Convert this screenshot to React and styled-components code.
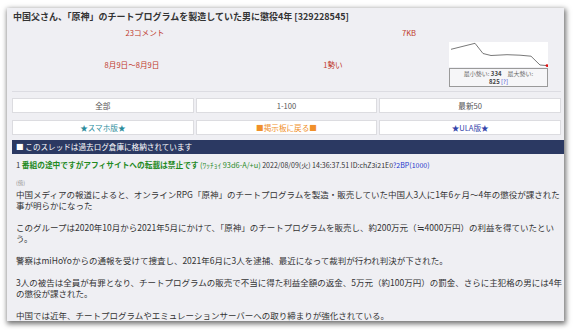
import React from "react";
import styled, { createGlobalStyle } from "styled-components";

const Global = createGlobalStyle`
  html, body { margin: 0; padding: 0; background: #ffffff; }
  body { font-family: "Noto Sans CJK JP", "Noto Sans", sans-serif; }
  * { box-sizing: border-box; }
`;

const Page = styled.div`
  width: 577px;
  height: 330px;
  padding: 8px 13px 9px 7px;
  overflow: hidden;
`;

const Card = styled.div`
  height: 313px;
  background: #efeff3;
  box-shadow: 1px 2px 5px 1px rgba(0, 0, 0, 0.55);
  padding: 3px 3px 0 5px;
  overflow: hidden;
  color: #333;
`;

const Title = styled.h1`
  margin: 0 0 0 1px;
  font-size: 9px;
  line-height: 12px;
  font-weight: 700;
  color: #333;
  white-space: nowrap;
`;

const Stats = styled.div`
  border-bottom: 1px solid #dcdce2;
  padding-bottom: 4px;
`;

const StatRow = styled.div`
  display: grid;
  grid-template-columns: ${(p) => p.$cols};
  align-items: center;
  margin-top: ${(p) => p.$mt}px;
  padding-left: 1px;
`;

const Stat = styled.div`
  text-align: center;
  color: #c0392b;
  font-size: 7.6px;
  line-height: 12px;
`;

const ChartBox = styled.div`
  width: 99px;
  margin-left: 34px;
`;

const ChartArea = styled.svg`
  display: block;
  width: 99px;
  height: 25px;
  background: #ffffff;
`;

const Legend = styled.div`
  margin-top: 1px;
  border: 1px solid #9a9a9a;
  background: #f6f6f8;
  height: 19px;
  padding-top: 1px;
  font-size: 6px;
  line-height: 8px;
  text-align: center;
  color: #666;
`;

const Strong = styled.b`
  color: #444;
`;

const Q = styled.span`
  color: #3344cc;
`;

const ButtonGrid = styled.div`
  display: grid;
  grid-template-columns: repeat(3, 1fr);
  column-gap: 2px;
  row-gap: 7px;
  margin-top: 6px;
`;

const NavButton = styled.div`
  height: 15px;
  background: #ffffff;
  border: 1px solid #dcdce0;
  color: ${(p) => p.$color || "#555"};
  font-size: 7.6px;
  line-height: 13px;
  text-align: center;
`;

const Notice = styled.div`
  margin-top: 5px;
  margin-right: -3px;
  height: 14px;
  background: #2b3962;
  color: #ffffff;
  font-size: 7.6px;
  line-height: 14px;
  padding-left: 4px;
`;

const Post = styled.div`
  padding: 5px 0 0 4px;
`;

const PostHead = styled.div`
  font-size: 7px;
  line-height: 11px;
  white-space: nowrap;
  color: #333;
`;

const Num = styled.span`
  font-size: 7.7px;
`;

const Name = styled.span`
  color: #1f8a1f;
  font-weight: ${(p) => (p.$bold ? 700 : 400)};
  font-size: ${(p) => (p.$bold ? "7.7px" : "7.4px")};
`;

const Link = styled.span`
  color: #2233cc;
`;

const Icon = styled.div`
  margin-top: 7px;
  height: 11px;
  font-size: 5.5px;
  line-height: 10px;
  color: #888;
`;

const Body = styled.div`
  font-size: 8.5px;
  line-height: 11px;
  color: #333;
  white-space: nowrap;
`;

const Para = styled.p`
  margin: 0 0 11px 0;
`;

const points = [
  [2, 7.3],
  [26, 1.3],
  [34, 11.5],
  [42, 13.5],
  [58, 12.7],
  [71, 13.2],
  [82, 14.2],
  [91, 23],
  [98, 23.6],
];

function Chart() {
  return (
    <ChartBox>
      <ChartArea viewBox="0 0 99 25">
        <polyline
          points={points.map((p) => p.join(",")).join(" ")}
          fill="none"
          stroke="#555"
          strokeWidth="0.8"
        />
        <circle cx="98" cy="23.6" r="1.4" fill="#e01010" />
      </ChartArea>
      <Legend>
        最小勢い: <Strong>334</Strong>　最大勢い:
        <br />
        <Strong>825</Strong> <Q>[?]</Q>
      </Legend>
    </ChartBox>
  );
}

const paragraphs = [
  [
    "中国メディアの報道によると、オンラインRPG「原神」のチートプログラムを製造・販売していた中国人3人に1年6ヶ月～4年の懲役が課された",
    "事が明らかになった",
  ],
  [
    "このグループは2020年10月から2021年5月にかけて、「原神」のチートプログラムを販売し、約200万元（≒4000万円）の利益を得ていたとい",
    "う。",
  ],
  ["警察はmiHoYoからの通報を受けて捜査し、2021年6月に3人を逮捕、最近になって裁判が行われ判決が下された。"],
  [
    "3人の被告は全員が有罪となり、チートプログラムの販売で不当に得た利益全額の返金、5万元（約100万円）の罰金、さらに主犯格の男には4年",
    "の懲役が課された。",
  ],
  ["中国では近年、チートプログラムやエミュレーションサーバーへの取り締まりが強化されている。"],
];

export default function App() {
  return (
    <>
      <Global />
      <Page>
        <Card>
          <Title>中国父さん、「原神」のチートプログラムを製造していた男に懲役4年 [329228545]</Title>
          <Stats>
            <StatRow $cols="264px 264px" $mt={4}>
              <Stat>23コメント</Stat>
              <Stat>7KB</Stat>
            </StatRow>
            <StatRow $cols="238px 164px auto" $mt={3}>
              <Stat>8月9日～8月9日</Stat>
              <Stat>1勢い</Stat>
              <Chart />
            </StatRow>
          </Stats>
          <ButtonGrid>
            <NavButton>全部</NavButton>
            <NavButton>1-100</NavButton>
            <NavButton>最新50</NavButton>
            <NavButton $color="#2a8c9c">★スマホ版★</NavButton>
            <NavButton $color="#f0902a">■掲示板に戻る■</NavButton>
            <NavButton $color="#3344aa">★ULA版★</NavButton>
          </ButtonGrid>
          <Notice>■ このスレッドは過去ログ倉庫に格納されています</Notice>
          <Post>
            <PostHead>
              <Num>1</Num> <Name $bold>番組の途中ですがアフィサイトへの転載は禁止です</Name>{" "}
              <Name>(ﾜｯﾁｮｲ 93d6-A/+u)</Name> 2022/08/09(火) 14:36:37.51 ID:chZ3i21E0
              <Link>?2BP(1000)</Link>
            </PostHead>
            <Icon>(傍)</Icon>
            <Body>
              {paragraphs.map((lines, i) => (
                <Para key={i}>
                  {lines.map((l, j) => (
                    <React.Fragment key={j}>
                      {j > 0 && <br />}
                      {l}
                    </React.Fragment>
                  ))}
                </Para>
              ))}
            </Body>
          </Post>
        </Card>
      </Page>
    </>
  );
}
